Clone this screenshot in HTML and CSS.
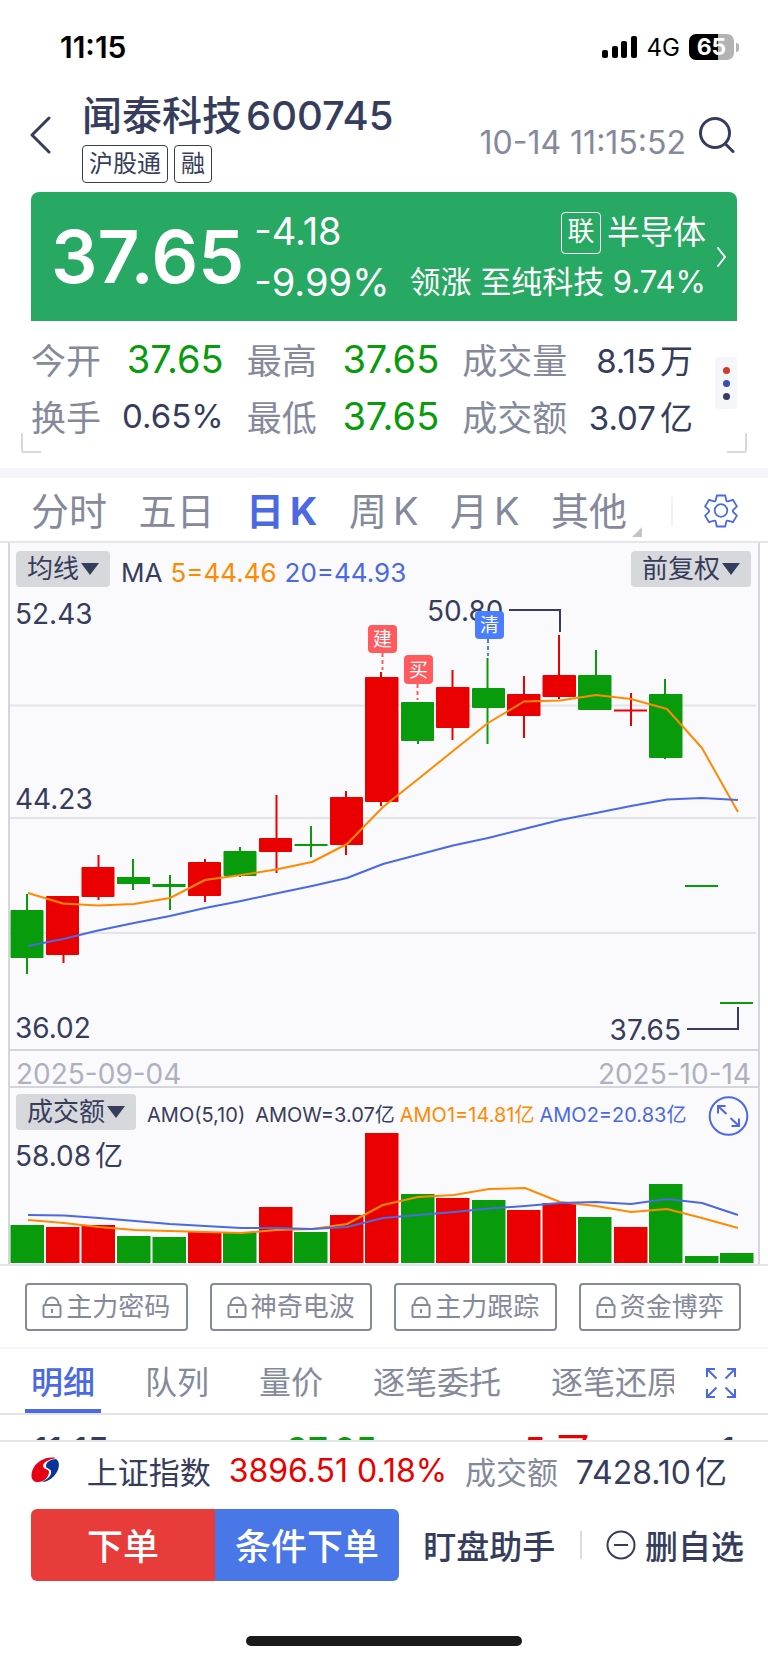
FILE: index.html
```html
<!DOCTYPE html>
<html lang="zh-CN">
<head>
<meta charset="utf-8">
<meta name="viewport" content="width=device-width, initial-scale=1">
<title>闻泰科技 600745</title>
<link rel="stylesheet" href="styles.css">
</head>
<body>
<div class="app">
  <div class="status">
    <span class="status-time">11:15</span>
    <div class="status-right">
      <svg width="36" height="22" viewBox="0 0 36 22" aria-hidden="true">
        <rect x="0" y="14" width="6" height="8" rx="2"/><rect x="10" y="10" width="6" height="12" rx="2"/><rect x="19" y="5" width="6" height="17" rx="2"/><rect x="29" y="0" width="6" height="22" rx="2"/>
      </svg>
      <span class="status-net">4G</span>
      <span class="battery"><span class="battery-body">65</span><span class="battery-tip"></span></span>
    </div>
  </div>

  <header class="header">
    <button class="icon-btn back" aria-label="返回">
      <svg width="22" height="38" viewBox="0 0 22 38"><path d="M19 2L2 19l17 17" fill="none" stroke="#363d5c" stroke-width="3" stroke-linecap="round" stroke-linejoin="round"/></svg>
    </button>
    <div class="title-block">
      <h1 class="title"><span>闻泰科技</span><span class="code">600745</span></h1>
      <div class="tags"><span class="tag">沪股通</span><span class="tag">融</span></div>
    </div>
    <time class="stamp">10-14 11:15:52</time>
    <button class="icon-btn search" aria-label="搜索">
      <svg width="36" height="36" viewBox="0 0 36 36" fill="none" stroke="#363d5c" stroke-width="3" stroke-linecap="round"><circle cx="16" cy="16" r="14.5"/><path d="M26.5 27L34 34.5"/></svg>
    </button>
  </header>

  <section class="quote">
    <strong class="price">37.65</strong>
    <div class="change"><span>-4.18</span><span>-9.99%</span></div>
    <div class="sector">
      <div class="sector-name"><span class="link-tag">联</span><span>半导体</span></div>
      <div class="sector-lead">领涨 至纯科技 9.74%</div>
    </div>
    <svg class="quote-arrow" width="12" height="22" viewBox="0 0 12 22"><path d="M2 2l7 9-7 9" fill="none" stroke="#fff" stroke-width="2" stroke-linecap="round" stroke-linejoin="round"/></svg>
  </section>

  <section class="stats">
    <dl class="stats-grid">
      <div class="stat"><dt>今开</dt><dd class="down">37.65</dd></div>
      <div class="stat"><dt>最高</dt><dd class="down">37.65</dd></div>
      <div class="stat"><dt>成交量</dt><dd class="plain">8.15<span class="unit">万</span></dd></div>
      <div class="stat"><dt>换手</dt><dd class="plain">0.65%</dd></div>
      <div class="stat"><dt>最低</dt><dd class="down">37.65</dd></div>
      <div class="stat"><dt>成交额</dt><dd class="plain">3.07<span class="unit">亿</span></dd></div>
    </dl>
    <button class="more" aria-label="更多"><i class="dot red"></i><i class="dot blue"></i><i class="dot navy"></i></button>
  </section>

  <nav class="periods">
    <button>分时</button><button>五日</button><button class="active">日<span class="k">K</span></button><button>周<span class="k">K</span></button><button>月<span class="k">K</span></button><button class="other">其他</button>
    <span class="periods-divider"></span>
    <button class="gear" aria-label="设置">
      <svg width="34" height="34" viewBox="0 0 34 34" fill="none" stroke="#4a69e2" stroke-width="1.8" stroke-linejoin="round"><path d="M12.8 1.500h8.400l1.200 5.200q.4 1 1.500.6l5-1.500 4 6.600-3.600 3.400q-.9 1.200 0 2.400l3.600 3.400-4 6.600-5-1.500q-1.100-.4-1.500.6l-1.200 5.200h-8.400l-1.200-5.200q-.4-1-1.500-.6l-5 1.500-4-6.600 3.600-3.400q.9-1.200 0-2.400l-3.600-3.400 4-6.600 5 1.500q1.100.4 1.500-.6z"/><circle cx="17" cy="16.500" r="6.300"/></svg>
    </button>
  </nav>

  <section class="chart">
    <div class="chart-bar">
      <button class="drop">均线<i class="tri"></i></button>
      <span class="ma"><span>MA</span><span class="c-orange">5=44.46</span><span class="c-blue">20=44.93</span></span>
      <button class="drop last">前复权<i class="tri"></i></button>
    </div>
    <svg class="plot" viewBox="10 597 748 452" role="img" aria-label="日K线">
      <path class="grid" d="M10 705.500H756M10 818H756M10 933H756"/>
      <text class="axis" x="15" y="624">52.43</text>
      <text class="axis" x="15" y="809">44.23</text>
      <text class="axis" x="15" y="1038">36.02</text>
      <text class="axis" x="427" y="621">50.80</text>
      <path class="leader" d="M509 610H560V632"/>
      <text class="axis" x="681" y="1040" text-anchor="end">37.65</text>
      <path class="leader" d="M687 1029H738V1007"/>
      <g class="g">
        <path d="M27 894V974M133 859V890M170 875V910M240 847V877M311 826V857M418 702V744M487.500 658V744M596 650V710M665 679V759"/>
        <rect x="10.500" y="910" width="33" height="48" rx="1"/><rect x="117" y="877" width="33" height="7"/><rect x="152.500" y="884" width="33" height="3"/><rect x="223.500" y="851" width="33" height="25" rx="1"/><rect x="294.500" y="844" width="33" height="2"/><rect x="401" y="702" width="33" height="39" rx="1"/><rect x="472" y="688" width="33" height="20" rx="1"/><rect x="578" y="675" width="33.500" height="35" rx="1"/><rect x="649" y="694" width="33.500" height="64" rx="1"/><rect x="685" y="885" width="33" height="2"/><rect x="720" y="1002" width="33" height="2"/>
      </g>
      <g class="r">
        <path d="M63.500 896V963M98.500 855V900M205 859V902M276.500 795V873M346 791V855M381 672V806M452.500 670V740M524 676V738M559 635V699M631 693V726"/>
        <rect x="46" y="896" width="33" height="59" rx="1"/><rect x="81.500" y="867" width="33" height="30" rx="1"/><rect x="188" y="862" width="33" height="34" rx="1"/><rect x="259" y="838" width="33" height="14" rx="1"/><rect x="330" y="797" width="33" height="48" rx="1"/><rect x="365" y="677" width="33.500" height="125" rx="1"/><rect x="436" y="687" width="33.500" height="41" rx="1"/><rect x="507" y="694" width="33.500" height="22" rx="1"/><rect x="542.500" y="675" width="33.500" height="22" rx="1"/><rect x="614" y="709.500" width="33" height="2"/>
      </g>
      <polyline class="line-o" points="28,893 63,903.500 98,905.500 134,904 170,898 205,880 241,875 276,869.500 312,862 347,844 383,807 417,780 453,751 488,723 524,701.500 560,700.500 596,695 631,699 667,709 702,748 738,812"/>
      <polyline class="line-b" points="28,946 63,939 98,930.500 134,923 170,916 205,908 241,901 276,893.500 312,886 347,878 383,864 417,855 453,845.500 488,838 524,829 560,820 596,813 631,806 667,799.500 702,798 738,800"/>
      <path class="dash dash-r" d="M382.500 653V670M417.500 684V700"/><path class="dash dash-b" d="M488 639V656"/>
      <rect class="mark-r" x="368" y="625" width="29" height="28" rx="4"/><text class="mark" x="382.500" y="646">建</text>
      <rect class="mark-r" x="404" y="655" width="29" height="29" rx="4"/><text class="mark" x="418.500" y="677">买</text>
      <rect class="mark-b" x="475" y="611" width="29" height="28" rx="4"/><text class="mark" x="489.500" y="632">清</text>
    </svg>
    <div class="dates"><span>2025-09-04</span><span>2025-10-14</span></div>
    <div class="vol-bar">
      <button class="drop">成交额<i class="tri"></i></button>
      <span class="amo"><span>AMO(5,10)</span><span>AMOW=3.07亿</span><span class="c-orange">AMO1=14.81亿</span><span class="c-blue">AMO2=20.83亿</span></span>
      <button class="expand" aria-label="展开">
        <svg width="41" height="40" viewBox="0 0 41 40" fill="none" stroke="#4a69e2" stroke-width="2"><circle cx="20.500" cy="20" r="18.800"/><path d="M10 17.500V10h7.500M10.500 10.500l8 7.500M31 22.500V30h-7.500M30.500 29.500l-8-7.500"/></svg>
      </button>
    </div>
    <svg class="plot" viewBox="10 1134 748 130" role="img" aria-label="成交额柱状图">
      <text class="axis" x="15" y="1166">58.08<tspan dx="4">亿</tspan></text>
      <g class="g">
        <rect x="10.500" y="1225" width="33.500" height="38"/><rect x="117" y="1236" width="33.500" height="27"/><rect x="152.500" y="1237" width="33.500" height="26"/><rect x="223" y="1232" width="33.500" height="31"/><rect x="294" y="1232" width="33.500" height="31"/><rect x="401" y="1194" width="33.500" height="69"/><rect x="472" y="1200" width="33.500" height="63"/><rect x="578" y="1217" width="33.500" height="46"/><rect x="649" y="1184" width="33.500" height="79"/><rect x="685" y="1256" width="33.500" height="7"/><rect x="720" y="1253" width="33.500" height="10"/>
      </g>
      <g class="r">
        <rect x="46" y="1227" width="33.500" height="36"/><rect x="81.500" y="1225" width="33.500" height="38"/><rect x="188" y="1232" width="33.500" height="31"/><rect x="259" y="1207" width="33.500" height="56"/><rect x="330" y="1215" width="33.500" height="48"/><rect x="365" y="1133" width="33.500" height="130"/><rect x="436" y="1198" width="33.500" height="65"/><rect x="507" y="1210" width="33.500" height="53"/><rect x="542.500" y="1203" width="33.500" height="60"/><rect x="614" y="1227" width="33.500" height="36"/>
      </g>
      <polyline class="line-o" points="28,1220 64,1223 99,1227 135,1230 170,1231 205,1232 241,1233 276,1230 312,1229 347,1224 383,1205 418,1197 454,1195 489,1189 525,1188 560,1202 596,1206 631,1212 667,1209 702,1218 738,1228"/>
      <polyline class="line-b" points="28,1215 64,1215.500 99,1218 135,1221 170,1224 205,1226 241,1228 276,1228 312,1229 347,1227 383,1218 418,1215 454,1212 489,1208.500 525,1206 560,1203 596,1202 631,1204 667,1199 702,1203 738,1215"/>
    </svg>
  </section>

  <div class="locks">
    <button class="lock"><svg width="20" height="22" viewBox="0 0 20 22" fill="none" stroke="#84899b" stroke-width="2"><rect x="1.500" y="9" width="17" height="12" rx="1"/><path d="M3.500 9V8a6.500 6.500 0 0 1 13 0v1M10 13v4"/></svg>主力密码</button>
    <button class="lock"><svg width="20" height="22" viewBox="0 0 20 22" fill="none" stroke="#84899b" stroke-width="2"><rect x="1.500" y="9" width="17" height="12" rx="1"/><path d="M3.500 9V8a6.500 6.500 0 0 1 13 0v1M10 13v4"/></svg>神奇电波</button>
    <button class="lock"><svg width="20" height="22" viewBox="0 0 20 22" fill="none" stroke="#84899b" stroke-width="2"><rect x="1.500" y="9" width="17" height="12" rx="1"/><path d="M3.500 9V8a6.500 6.500 0 0 1 13 0v1M10 13v4"/></svg>主力跟踪</button>
    <button class="lock"><svg width="20" height="22" viewBox="0 0 20 22" fill="none" stroke="#84899b" stroke-width="2"><rect x="1.500" y="9" width="17" height="12" rx="1"/><path d="M3.500 9V8a6.500 6.500 0 0 1 13 0v1M10 13v4"/></svg>资金博弈</button>
  </div>

  <nav class="tabs">
    <div class="tabs-scroll">
      <button class="active">明细</button><button>队列</button><button>量价</button><button>逐笔委托</button><button>逐笔还原</button>
    </div>
    <button class="icon-btn full" aria-label="全屏">
      <svg width="30" height="30" viewBox="0 0 30 30" fill="none" stroke="#4a69e2" stroke-width="2"><path d="M1 9V1h8M1 1l9.500 9.500M21 1h8v8M29 1l-9.500 9.500M1 21v8h8M1 29l9.500-9.500M21 29h8v-8M29 29l-9.500-9.500"/></svg>
    </button>
  </nav>

  <div class="trades">
    <div class="trade"><span>11:15</span><span class="down">37.65</span><span class="up">5 买</span><span>1</span></div>
  </div>

  <div class="index">
    <svg width="29" height="26" viewBox="0 0 29 26" aria-hidden="true">
      <path d="M25 1C16-1 5 4 1.500 13C-1 20 1 25 7 25C13 25 18 20 18 15C18 12 15 13 13 11C10 8 14 3 25 1Z" fill="#e60012"/>
      <path d="M25 2C30 5 28 14 23 19C19 23 15 25 11 25C17 22 21 18 20 14C19 11 15 12 15 9C15 5 20 2 25 2Z" fill="#0b3393"/>
    </svg>
    <span class="index-name">上证指数</span>
    <span class="up">3896.51 0.18%</span>
    <span class="index-label">成交额</span>
    <span>7428.10<span class="unit">亿</span></span>
  </div>

  <footer class="actions">
    <div class="trade-btns"><button class="sell">下单</button><button class="cond">条件下单</button></div>
    <button class="assist">盯盘助手</button>
    <span class="actions-divider"></span>
    <button class="assist remove"><svg width="30" height="30" viewBox="0 0 30 30" fill="none" stroke="#363d5c" stroke-width="2"><circle cx="15" cy="15" r="13.500"/><path d="M8 15h14"/></svg>删自选</button>
  </footer>
  <div class="home"></div>
</div>
</body>
</html>
```
FILE: styles.css
```css
* { box-sizing: border-box; }
body {
  margin: 0;
  background: #fff;
  color: #363d5c;
  font-family: Inter, "Noto Sans CJK SC", sans-serif;
}
button {
  margin: 0;
  padding: 0;
  border: 0;
  background: none;
  color: inherit;
  font: inherit;
  white-space: nowrap;
}
svg { display: block; flex: none; }
.up { color: #eb0000; }
.down { color: #089c0c; }
.c-orange { color: #ff8a00; }
.c-blue { color: #4a69e2; }

.status {
  display: flex;
  justify-content: space-between;
  align-items: center;
  height: 94px;
  padding: 0 29px 0 60px;
  color: #000;
}
.status-time { font-size: 30px; font-weight: 600; }
.status-right { display: flex; align-items: center; gap: 9px; }
.status-net { font-size: 24px; }
.battery { display: flex; align-items: center; gap: 2px; }
.battery-body {
  width: 45px;
  height: 26px;
  border-radius: 7px;
  background: linear-gradient(90deg, #000 65%, #b3b3b3 65%);
  color: #fff;
  font-size: 23px;
  font-weight: 700;
  line-height: 26px;
  text-align: center;
}
.battery-tip { width: 3px; height: 9px; border-radius: 0 3px 3px 0; background: #b3b3b3; }

.header { display: flex; height: 98px; padding: 0 33px 0 30px; }
.icon-btn { display: flex; align-items: center; }
.back { width: 52px; padding-bottom: 16px; }
.title-block { flex: 1; }
.title {
  display: flex;
  align-items: center;
  gap: 4px;
  height: 44px;
  margin: 0;
  font-size: 40px;
  font-weight: 500;
  line-height: 44px;
  white-space: nowrap;
}
.tags { display: flex; gap: 6px; margin-top: 7px; }
.tag {
  height: 38px;
  padding: 0 6px;
  border: 1px solid #363d5c;
  border-radius: 4px;
  font-size: 24px;
  line-height: 35px;
}
.stamp { margin-top: 31px; color: #84899b; font-size: 32px; line-height: 36px; white-space: nowrap; }
.search { height: 36px; margin: 23px 0 0 13px; }

.quote {
  display: flex;
  align-items: center;
  height: 129px;
  margin: 0 31px;
  padding: 0 9px 0 20px;
  border-radius: 8px 8px 0 0;
  background: #27a863;
  color: #fff;
  white-space: nowrap;
}
.price { font-size: 73px; font-weight: 600; }
.change {
  display: flex;
  flex-direction: column;
  margin-left: 10px;
  font-size: 38px;
  line-height: 51px;
}
.sector { flex: 1; display: flex; flex-direction: column; align-items: flex-end; }
.sector-name { display: flex; align-items: center; gap: 6px; font-size: 33px; line-height: 51px; }
.link-tag {
  width: 40px;
  height: 42px;
  border: 1px solid #fff;
  border-radius: 4px;
  font-size: 27px;
  line-height: 38px;
  text-align: center;
}
.sector-lead { font-size: 31px; line-height: 48px; }
.quote-arrow { margin-left: 10px; }

.stats {
  position: relative;
  display: flex;
  align-items: center;
  justify-content: space-between;
  gap: 22px;
  height: 147px;
  padding: 0 31px;
}
.stats::before, .stats::after {
  content: "";
  position: absolute;
  bottom: 15px;
  width: 18px;
  height: 18px;
  border: solid #d5d7e0;
}
.stats::before { left: 21px; border-width: 0 0 2px 2px; border-bottom-left-radius: 3px; }
.stats::after { right: 21px; border-width: 0 2px 2px 0; border-bottom-right-radius: 3px; }
.stats-grid {
  flex: 1;
  display: grid;
  grid-template-columns: 192fr 192fr 230fr;
  grid-auto-rows: 57px;
  column-gap: 23px;
  margin: 0 0 15px;
}
.stat { display: flex; align-items: center; justify-content: space-between; white-space: nowrap; }
.stat dt { color: #84899b; font-size: 35px; }
.stat dd { margin: 0; font-size: 38px; }
.stat .plain { font-size: 33px; }
.unit { margin-left: 4px; }
.more {
  display: flex;
  flex-direction: column;
  align-items: center;
  justify-content: center;
  gap: 6px;
  width: 22px;
  height: 52px;
  margin-bottom: 23px;
  border-radius: 4px;
  background: #f5f6f9;
}
.dot { width: 7px; height: 7px; border-radius: 50%; }
.red { background: #d4382a; }
.blue { background: #3450b8; }
.navy { background: #363d5c; }

.periods {
  display: flex;
  align-items: center;
  justify-content: space-between;
  height: 75px;
  padding: 3px 30px 0 31px;
  border-top: 10px solid #f5f5fa;
  border-bottom: 2px solid #e6e6ea;
  color: #84899b;
  font-size: 38px;
  line-height: 58px;
}
.periods .active { color: #4a69e2; font-weight: 700; }
.k { margin-left: 6px; }
.other { position: relative; }
.other::after {
  content: "";
  position: absolute;
  right: -15px;
  bottom: 3px;
  border-left: 10px solid transparent;
  border-bottom: 10px solid #c4c4c4;
}
.periods-divider { width: 2px; height: 29px; margin-left: 12px; background: #f0f1f5; }

.chart {
  margin: 0 8px;
  border: solid #d5d6dc;
  border-width: 0 2px;
  background: #fafafd;
}
.chart-bar { display: flex; align-items: center; height: 54px; padding: 0 7px 2px 6px; }
.drop {
  display: flex;
  align-items: center;
  gap: 2px;
  height: 36px;
  padding: 0 11px;
  border-radius: 4px;
  background: #d7d8dc;
  font-size: 26px;
  line-height: 34px;
}
.tri { border: solid transparent; border-width: 12px 9px 0; border-top-color: #363d5c; }
.last { margin-left: auto; }
.ma { display: flex; gap: 8px; margin-left: 11px; padding-top: 6px; font-size: 26px; white-space: nowrap; }
.plot { width: 100%; height: auto; overflow: visible; }
.grid { stroke: #e4e4e6; stroke-width: 2; }
.axis { fill: #363d5c; font-size: 28px; }
.leader { fill: none; stroke: #363d5c; stroke-width: 2; }
.g { fill: #089c0c; stroke: none; }
.g path { stroke: #089c0c; stroke-width: 2; }
.r { fill: #eb0000; stroke: none; }
.r path { stroke: #eb0000; stroke-width: 2; }
.line-o, .line-b { fill: none; stroke-width: 2; stroke-linejoin: round; }
.line-o { stroke: #ff8a00; }
.line-b { stroke: #4a69e2; }
.dash { stroke-width: 2; stroke-dasharray: 4 3; }
.dash-r { stroke: #ff5b5e; }
.dash-b { stroke: #4a7dff; }
.mark-r { fill: #ff5b5e; }
.mark-b { fill: #4a7dff; }
.mark { fill: #fff; font-size: 19px; text-anchor: middle; }
.dates {
  display: flex;
  justify-content: space-between;
  height: 39px;
  padding: 0 7px 0 6px;
  border: solid #d5d6dc;
  border-width: 2px 0;
  color: #aeb1bd;
  font-size: 28px;
  line-height: 46px;
}
.dates span { height: 35px; }
.vol-bar { display: flex; align-items: flex-start; height: 46px; padding: 6px 9px 0 6px; }
.amo { display: flex; flex: 1; align-items: baseline; gap: 5px; margin-left: 11px; font-size: 20px; line-height: 42px; white-space: nowrap; }
.amo span:first-child { margin-right: 5px; }
.expand { padding-top: 2px; }

.locks {
  display: grid;
  grid-template-columns: repeat(4, 1fr);
  gap: 22px;
  height: 85px;
  padding: 17px 27px 16px 25px;
  border-top: 2px solid #e6e6ea;
  border-bottom: 2px solid #f5f5fa;
}
.lock {
  display: flex;
  align-items: center;
  justify-content: center;
  gap: 4px;
  border: 2px solid #84899b;
  border-radius: 4px;
  color: #84899b;
  font-size: 26px;
  line-height: 40px;
}
.tabs {
  display: flex;
  justify-content: space-between;
  height: 66px;
  padding: 0 32px 0 25px;
  border-bottom: 2px solid #e4e4e6;
}
.tabs-scroll { display: flex; gap: 38px; width: 649px; overflow: hidden; color: #84899b; font-size: 32px; }
.tabs-scroll button { flex: none; padding: 7px 6px 0; border-bottom: 4px solid transparent; line-height: 52px; }
.tabs-scroll .active { border-color: #4a69e2; color: #4a69e2; font-weight: 500; }
.full { padding-top: 3px; }

.trades { height: 27px; overflow: hidden; border-bottom: 2px solid #e6e6ea; }
.trade {
  display: grid;
  grid-template-columns: 253fr 238fr 175fr 36fr;
  padding: 11px 33px 0;
  font-size: 35px;
  font-weight: 500;
  line-height: 48px;
  white-space: nowrap;
}
.trade span:last-child { justify-self: end; }

.index {
  display: flex;
  align-items: center;
  justify-content: space-between;
  height: 58px;
  padding: 0 41px 2px 31px;
  font-size: 32px;
  white-space: nowrap;
}
.index-name { margin-left: 9px; font-size: 31px; }
.index-label { color: #84899b; font-size: 31px; }
.actions {
  display: flex;
  align-items: center;
  justify-content: space-between;
  margin-top: 9px;
  padding: 0 24px 0 31px;
  font-weight: 500;
}
.trade-btns {
  display: grid;
  grid-template-columns: 1fr 1fr;
  width: 368px;
  height: 72px;
  border-radius: 6px;
  overflow: hidden;
  color: #fff;
  font-size: 36px;
}
.trade-btns button { padding-bottom: 3px; }
.sell { background: #e73c3a; }
.cond { background: #4a77e8; }
.assist { display: flex; align-items: center; gap: 9px; font-size: 33px; }
.actions-divider { width: 2px; height: 28px; background: #dcdde3; }
.home {
  width: 36%;
  height: 10px;
  margin: 55px auto 17px;
  border-radius: 5px;
  background: #1a1a1a;
}
```
